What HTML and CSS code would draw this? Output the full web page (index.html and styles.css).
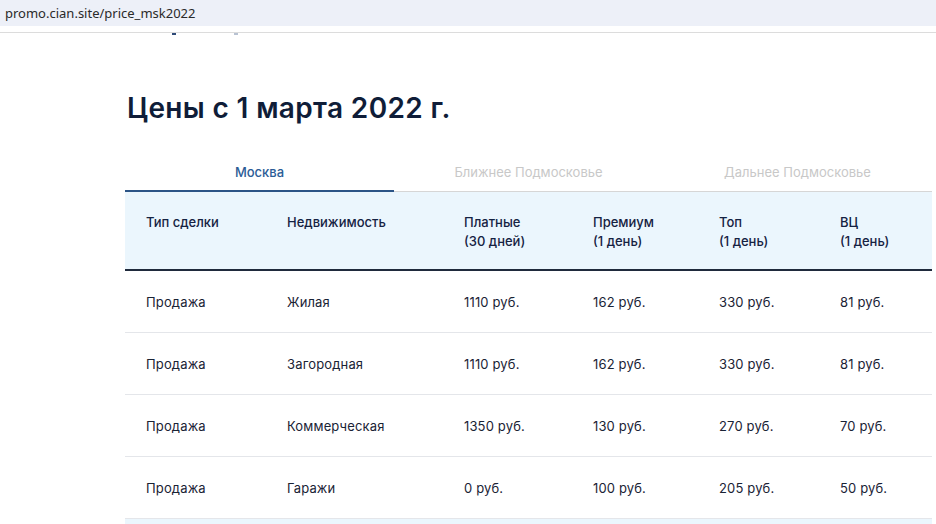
FILE: index.html
```html
<!DOCTYPE html>
<html lang="ru">
<head>
<meta charset="utf-8">
<title>Цены с 1 марта 2022 г.</title>
<link rel="stylesheet" href="styles.css">
</head>
<body>
<div class="urlbar">promo.cian.site/price_msk2022</div>
<div class="cutline">
  <span class="mark mark-dark"></span>
  <span class="mark mark-grey"></span>
</div>
<main class="content">
  <h1 class="title">Цены с 1 марта 2022 г.</h1>
  <div class="tabs">
    <div class="tab tab-active">Москва</div>
    <div class="tab">Ближнее Подмосковье</div>
    <div class="tab">Дальнее Подмосковье</div>
  </div>
  <table class="prices">
    <colgroup>
      <col class="c1"><col class="c2"><col class="c3"><col class="c4"><col class="c5"><col class="c6">
    </colgroup>
    <thead>
      <tr>
        <th>Тип сделки</th>
        <th>Недвижимость</th>
        <th>Платные<br>(30 дней)</th>
        <th>Премиум<br>(1 день)</th>
        <th>Топ<br>(1 день)</th>
        <th>ВЦ<br>(1 день)</th>
      </tr>
    </thead>
    <tbody>
      <tr><td>Продажа</td><td>Жилая</td><td>1110 руб.</td><td>162 руб.</td><td>330 руб.</td><td>81 руб.</td></tr>
      <tr><td>Продажа</td><td>Загородная</td><td>1110 руб.</td><td>162 руб.</td><td>330 руб.</td><td>81 руб.</td></tr>
      <tr><td>Продажа</td><td>Коммерческая</td><td>1350 руб.</td><td>130 руб.</td><td>270 руб.</td><td>70 руб.</td></tr>
      <tr><td>Продажа</td><td>Гаражи</td><td>0 руб.</td><td>100 руб.</td><td>205 руб.</td><td>50 руб.</td></tr>
      <tr class="row-tint"><td></td><td></td><td></td><td></td><td></td><td></td></tr>
    </tbody>
  </table>
</main>
</body>
</html>
```

FILE: styles.css
```css
html, body {
  margin: 0;
  padding: 0;
  background: #ffffff;
  overflow: hidden;
}

body {
  font-family: Inter, "Noto Sans", sans-serif;
  color: #152242;
}

.urlbar {
  height: 26px;
  box-sizing: border-box;
  padding: 4px 0 0 5px;
  background: #edf0f8;
  font-family: "Noto Sans", "Open Sans", sans-serif;
  font-size: 13px;
  line-height: 18px;
  color: #2a2a2a;
}

.cutline {
  height: 6px;
  border-bottom: 1px solid #dcdcdc;
  position: relative;
}

.mark {
  position: absolute;
  top: 7px;
  height: 2px;
  width: 4px;
}

.mark-dark { left: 172px; background: #2e4a78; }
.mark-grey { left: 234px; background: #b8c2d2; }

.content {
  margin-left: 125px;
  width: 807px;
}

.title {
  margin: 58px 0 0 2px;
  font-size: 28px;
  line-height: 34px;
  font-weight: 600;
  letter-spacing: 0.35px;
  color: #0f1d38;
}

.tabs {
  display: grid;
  grid-template-columns: 269px 269px 269px;
  margin-top: 25px;
  border-bottom: 1px solid #d6d6d6;
}

.tab {
  text-align: center;
  font-size: 13px;
  line-height: 18px;
  padding: 13px 0 9px;
  color: #c8c8c8;
  margin-bottom: -1px;
  border-bottom: 2px solid transparent;
}

.tab-active {
  color: #2b5c96;
  font-weight: 500;
  border-bottom-color: #2b5486;
}

.prices {
  width: 807px;
  border-collapse: collapse;
  table-layout: fixed;
  font-size: 13px;
}

.c1 { width: 141px; }
.c2 { width: 177px; }
.c3 { width: 129px; }
.c4 { width: 126px; }
.c5 { width: 121px; }
.c6 { width: 113px; }

.prices thead tr {
  background: #ebf6fd;
  border-bottom: 2px solid #1f2a3c;
}

.prices th {
  text-align: left;
  font-weight: 500;
  line-height: 19px;
  padding: 21px 0 18px 21px;
  vertical-align: top;
  color: #152242;
}

.prices td {
  padding: 0 0 0 21px;
  height: 61px;
  line-height: 18px;
  vertical-align: middle;
  border-bottom: 1px solid #e4e6ea;
  color: #1a2335;
  letter-spacing: 0.15px;
}

.prices .row-tint {
  background: #ebf6fd;
}
```
